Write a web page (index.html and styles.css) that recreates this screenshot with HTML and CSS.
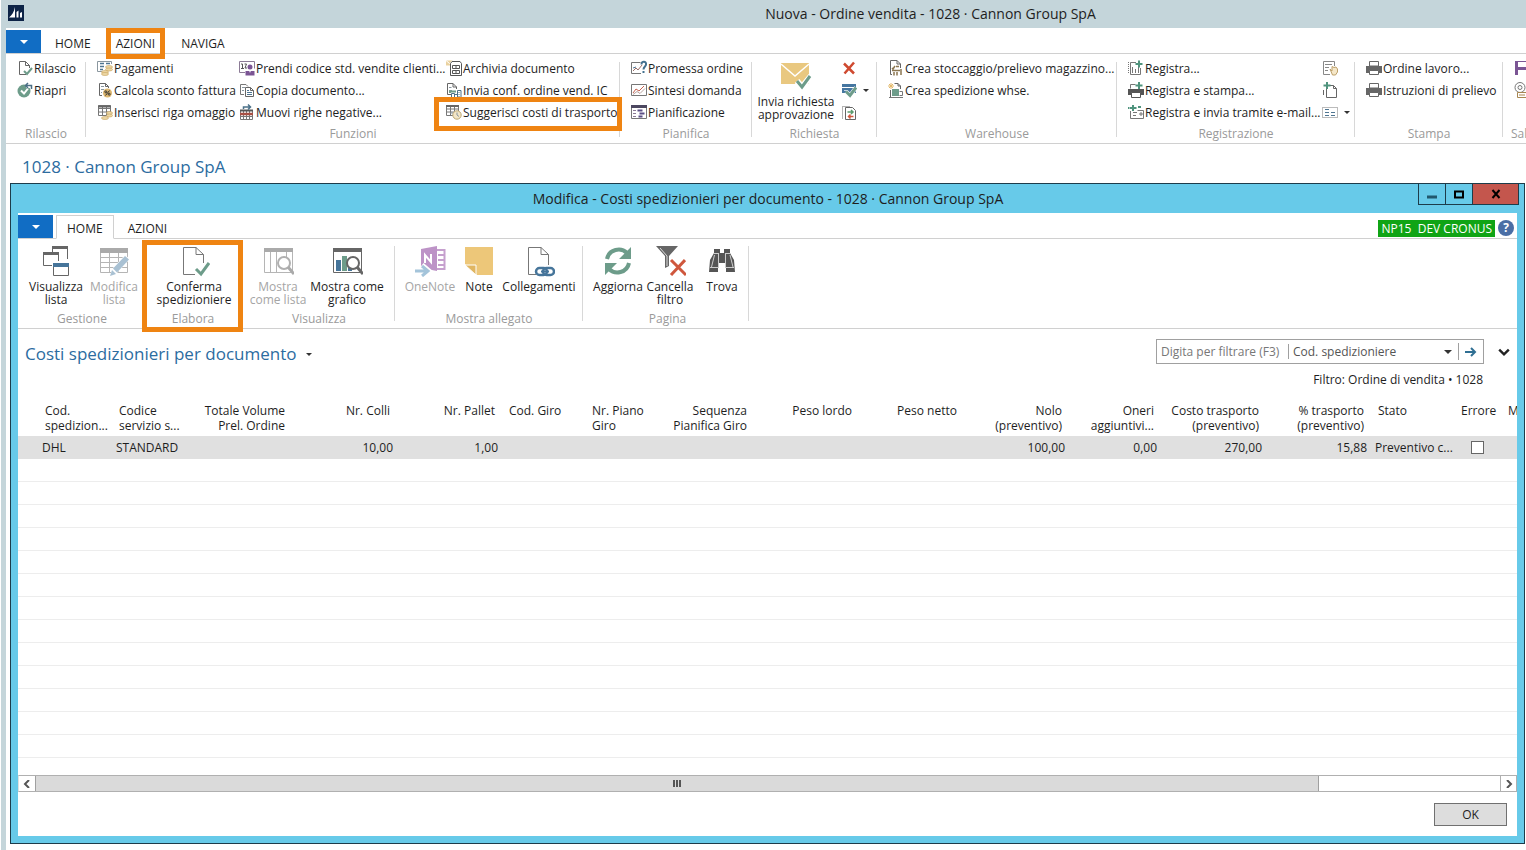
FILE: index.html
```html
<!DOCTYPE html>
<html lang="it">
  <head>
    <meta charset="UTF-8" />
    <meta name="viewport" content="width=device-width, initial-scale=1.0" />
    <title>Nuova - Ordine vendita - 1028 · Cannon Group SpA</title>
    <link rel="stylesheet" href="styles.css">
  </head>
  <body>
    <!-- icon sprite -->
    <svg class="sprite" aria-hidden="true">
      <symbol id="i-page-check" viewBox="0 0 16 16">
        <path d="M9 14.500H2.500V1.500H8.500L12.500 5.500V8M8.500 1.500V5.500H12.500" fill="none" stroke="#666" />
        <path d="M7 11l3 3 5-6" fill="none" stroke="#6d9c8a" stroke-width="2" />
      </symbol>
      <symbol id="i-reopen" viewBox="0 0 16 16">
        <circle cx="7" cy="9" r="6.500" fill="#6d9c8a" />
        <path d="M4 8.500l3 3 4-5" fill="none" stroke="#fff" stroke-width="2" />
        <path d="M15 7V4.500H9" fill="none" stroke="#fff" stroke-width="3" />
        <path d="M14.500 7V3.500H9M11 1L8.500 3.500 11 6" fill="none" stroke="#4b6f86" stroke-width="1.500" />
      </symbol>
      <symbol id="i-payments" viewBox="0 0 16 16">
        <path d="M8 11.500H.5V1.500H14.500V4" fill="none" stroke="#8a979f" />
        <path d="M3 3.500h4M3 6.500h4M3 9.500h3M9 3.500h4" stroke="#4f7591" stroke-width="1.500" />
        <g fill="#ecd7a5" stroke="#c7a35c" stroke-width=".6"><ellipse cx="12" cy="7" rx="3.500" ry="1.500" /><ellipse cx="12" cy="9.500" rx="3.500" ry="1.500" /><ellipse cx="8" cy="12" rx="3.500" ry="1.500" /><ellipse cx="8" cy="14" rx="3.500" ry="1.500" /></g>
      </symbol>
      <symbol id="i-discount" viewBox="0 0 16 16">
        <path d="M5 13.500H2.500V1.500H8.500L11.500 4.500V6M8.500 1.500V4.500H11.500" fill="none" stroke="#666" />
        <path d="M4 4.500h3M4 7.500h3M4 10.500h1" stroke="#8a979f" />
        <circle cx="10.500" cy="11" r="4.500" fill="#dcb66f" />
        <path d="M12.500 8.500l-4 5" stroke="#333" />
        <g fill="none" stroke="#333"><circle cx="8.800" cy="9.800" r="1" /><circle cx="12.200" cy="12.200" r="1" /></g>
      </symbol>
      <symbol id="i-gift-line" viewBox="0 0 16 16">
        <path d="M1.500 1.500h12v10h-12zM1.500 4.500h12M1.500 8h12M5.500 1.500v10M9.500 1.500v10" fill="none" stroke="#777" />
        <path d="M1 2.500h13" stroke="#666" stroke-width="2" />
        <g fill="#ecd7a5" stroke="#c7a35c" stroke-width=".6"><ellipse cx="12.500" cy="9" rx="3" ry="1.500" /><ellipse cx="12.500" cy="11.500" rx="3" ry="1.500" /><ellipse cx="8" cy="14" rx="3.500" ry="1.500" /></g>
      </symbol>
      <symbol id="i-std-code" viewBox="0 0 16 16">
        <path d="M6 12.500H.5v-11h15v7" fill="none" stroke="#8c7b96" />
        <path d="M2 4h1.500v4M2 8.500h3M5.500 4h2L6 8h2" fill="none" stroke="#555" />
        <circle cx="11" cy="7" r="2.500" fill="#7b5594" />
        <path d="M6.500 15.500V11h9v4.500z" fill="#7b5594" /><path d="M10 10.500l1 2.500 1-2.500z" fill="#fff" />
      </symbol>
      <symbol id="i-copy" viewBox="0 0 16 16">
        <path d="M5 12.500H1.500V2.500H7L9 4.500" fill="none" stroke="#777" />
        <path d="M3 5.500h3M3 8.500h2" stroke="#8a979f" />
        <path d="M6.500 5.500h5l3 3v6h-8z" fill="#fff" stroke="#666" /><path d="M11.500 5.500v3h3" fill="none" stroke="#666" />
        <path d="M8 8.500h2M8 10.500h5M8 12.500h5" stroke="#4f7591" />
      </symbol>
      <symbol id="i-move-lines" viewBox="0 0 16 16">
        <path d="M1.500 6.500h12v9h-12zM1.500 12.500h12M4.500 6v9M7.500 6v9M10.500 6v9" fill="none" stroke="#777" />
        <path d="M1 6.500h13" stroke="#555" stroke-width="2" /><path d="M1 10h13" stroke="#a85044" stroke-width="2.500" />
        <path d="M4.500 5V3h7M9 .5L11.500 3 9 5.500" fill="none" stroke="#4b7189" stroke-width="1.500" />
      </symbol>
      <symbol id="i-archive" viewBox="0 0 16 16">
        <path d="M0 .5h7v5H0z" fill="#ead2a0" /><path d="M0 .5l3.500 3 3.500-3" fill="none" stroke="#fff" />
        <path d="M4.500 3.500l1.500-2h8l1.500 2v12h-11z" fill="#fff" stroke="#555" />
        <path d="M6.500 5.500h7v3h-7zM6.500 10.500h7v3h-7zM9 7h2M9 12h2" fill="none" stroke="#555" />
      </symbol>
      <symbol id="i-send-ic" viewBox="0 0 16 16">
        <path d="M5 12.500H1.500V1.500H7L10.500 5V7M7 1.500V5H10.500" fill="none" stroke="#666" />
        <path d="M3 5.500h2.500M3 8.500h3" stroke="#8a979f" />
        <path d="M4 11V9.500h6" fill="none" stroke="#6d9c8a" stroke-width="2" />
        <path d="M5.500 15.500v-4h3v4zM11.500 15.500v-7h3.500v7zM8.500 15.500v-3h3v3" fill="#fff" stroke="#4b7189" />
        <path d="M13 10v5" stroke="#4b7189" stroke-dasharray="1" />
      </symbol>
      <symbol id="i-suggest" viewBox="0 0 16 16">
        <path d="M.5 1.500h12v10H.5zM.5 5h12M.5 8h12M4.500 1.500v10M8.500 1.500v10" fill="none" stroke="#777" />
        <path d="M0 2h13" stroke="#666" stroke-width="2" />
        <circle cx="11" cy="11" r="4.200" fill="#f3e6c6" stroke="#bda873" /><path d="M11 8.500V11l2 1.500M4 9h3" fill="none" stroke="#8a979f" />
      </symbol>
      <symbol id="i-promise" viewBox="0 0 16 16">
        <path d="M10 13.500H.5V2.500h9" fill="none" stroke="#777" />
        <path d="M2 11l3-3 2 2 4-5" fill="none" stroke="#9a6f6a" /><path d="M2 8l3-1" stroke="#4f7591" />
        <path d="M10.500 4.500c0-4 5-3.500 4.500 0 0 2-2.500 2-2.500 5" fill="none" stroke="#42708f" stroke-width="2" /><path d="M11.500 11h2v2h-2z" fill="#42708f" />
      </symbol>
      <symbol id="i-demand" viewBox="0 0 16 16">
        <path d="M.5 2.500h15v11H.5z" fill="none" stroke="#777" />
        <path d="M2 11l3-4 3 2 5-5" fill="none" stroke="#c4604f" /><path d="M2 12.500l4-3 3 2 5-5" fill="none" stroke="#b9a4a0" />
      </symbol>
      <symbol id="i-planning" viewBox="0 0 16 16">
        <path d="M.5 1.500h15v13H.5z" fill="none" stroke="#777" /><path d="M0 2.500h16" stroke="#4c4760" stroke-width="3" />
        <path d="M2 6.500h3M2 9.500h3M2 12.500h3" stroke="#8b7b96" /><path d="M6.500 6.500h5M8.500 9.500h5M7.500 12.500h4" stroke="#5b4f86" stroke-width="2" />
      </symbol>
      <symbol id="i-mail-check" viewBox="0 0 32 32">
        <path d="M1 3h28v21H1z" fill="#e9c880" /><path d="M1 4l14 12L29 4" fill="none" stroke="#fff" stroke-width="1.500" />
        <path d="M17 21l5 6 9-11" fill="none" stroke="#fff" stroke-width="6" /><path d="M17 21l5 6 8-11" fill="none" stroke="#6d9c8a" stroke-width="3" />
      </symbol>
      <symbol id="i-cross" viewBox="0 0 16 16">
        <path d="M3 3.500l10 10M13 2.500L3.500 13.500" stroke="#cf4a30" stroke-width="2.500" />
      </symbol>
      <symbol id="i-approve" viewBox="0 0 16 16">
        <path d="M1 2h14v9H1z" fill="#4576a0" /><path d="M1 5.500h14" stroke="#fff" /><path d="M3 8.500h3" stroke="#c5d6e4" />
        <path d="M5 9.500l4 4 6-8" fill="none" stroke="#fff" stroke-width="4" /><path d="M5 9.500l4 4 6-8" fill="none" stroke="#6d9c8a" stroke-width="3" />
      </symbol>
      <symbol id="i-comments" viewBox="0 0 16 16">
        <path d="M1.500 14.500v-12h7" fill="none" stroke="#666" stroke-dasharray="1" /><path d="M4.500 3.500h7l3 3v9h-10z" fill="#fff" stroke="#666" />
        <path d="M6.500 8h5M10 6l2 2-2 2" fill="none" stroke="#5c9b6e" stroke-width="1.500" /><path d="M12.500 12.500H8M9.500 10.500l-2 2 2 2" fill="none" stroke="#cf5a40" stroke-width="1.500" />
      </symbol>
      <symbol id="i-pick" viewBox="0 0 16 16">
        <path d="M4 14.500H2.500V.5H9L12.500 4V8M9 .5V4H12.500" fill="none" stroke="#666" />
        <path d="M4 8l1 1 2-3M8 6.500h3M4 10.500h8M6 12v3.500M9 12v3.500M13 9v6" fill="none" stroke="#8b7650" stroke-width="1.500" />
      </symbol>
      <symbol id="i-ship" viewBox="0 0 16 16">
        <path d="M3 1v6M0 4h6M1 2l4 4M5 2L1 6" stroke="#e3b96b" /><path d="M2.500 8v7M6.500 1.500H10L12.500 4V7M10 1.500V4h2.500" fill="none" stroke="#666" />
        <path d="M4 7h7v7H4z" fill="#6d9c8a" /><path d="M11.500 9.500h3v4h-3M1 15.500h14" fill="none" stroke="#777" />
      </symbol>
      <symbol id="i-post" viewBox="0 0 16 16">
        <path d="M8 2.500H2.500v12h10V8M4.500 7v6M7.500 9v4M10.500 7v6" fill="none" stroke="#777" /><path d="M.5 2v12" stroke="#777" stroke-dasharray="1" />
        <path d="M11 .5v7M7.500 4h7" stroke="#4f937d" stroke-width="2" />
      </symbol>
      <symbol id="i-post-print" viewBox="0 0 16 16">
        <path d="M0 7h16v6H0z" fill="#555" /><path d="M3.500 10.500h9v5h-9z" fill="#fff" stroke="#555" /><path d="M2.500 6.500v-4h5" fill="none" stroke="#777" />
        <path d="M11 0v7M7.500 3.500h7" stroke="#4f937d" stroke-width="2" />
      </symbol>
      <symbol id="i-post-mail" viewBox="0 0 16 16">
        <path d="M2.500 7v7.500h13v-8h-6M5 8.500h4M5 11.500h3M12 9h2v2h-2z" fill="none" stroke="#777" />
        <path d="M5 1v6M1.500 4h7M0 4h1M10 3h3" stroke="#4f937d" stroke-width="2" />
      </symbol>
      <symbol id="i-hand-page" viewBox="0 0 16 16">
        <path d="M8 14.500H1.500v-13h11V6M3 4.500h7M3 7.500h4M3 10.500h3" fill="none" stroke="#888" />
        <path d="M8 9l2 2V6.500l2 1 2-.5 1.500 2v3l-2 3h-3z" fill="#f5e7c8" stroke="#bda06a" />
      </symbol>
      <symbol id="i-new-page" viewBox="0 0 16 16">
        <path d="M4.500 7v8.500h10v-9L11.500 3.500H8M11.500 3.500v3h3M1.500 8v5" fill="none" stroke="#666" /><path d="M5 0v7M1.500 3.500h7" stroke="#4f937d" stroke-width="2" />
      </symbol>
      <symbol id="i-list-dim" viewBox="0 0 16 16">
        <path d="M.5 3.500h15v10H.5z" fill="none" stroke="#777" stroke-dasharray="1" /><path d="M3 5.500h4M3 8.500h4M3 11.500h4M9 8.500h4M9 11.500h4" stroke="#4f7591" />
      </symbol>
      <symbol id="i-printer" viewBox="0 0 16 16">
        <path d="M0 6h16v7H0z" fill="#666" /><path d="M3.500 1.500h9v5h-9zM3.500 10.500h9v4h-9z" fill="#fff" stroke="#666" /><path d="M3 6.500h10" stroke="#666" stroke-width="2" />
      </symbol>
      <symbol id="i-save" viewBox="0 0 16 16">
        <path d="M1 1h12l2 2v12H1z" fill="#7b5594" /><path d="M4 2h8v5H4zM4 10h8v5H4z" fill="#fff" />
      </symbol>
      <symbol id="i-at" viewBox="0 0 16 16">
        <circle cx="6" cy="5.500" r="5" fill="none" stroke="#777" /><circle cx="6" cy="5.500" r="2" fill="none" stroke="#777" /><path d="M3.500 10.500h11v5h-11zM5 13h6" fill="#fff" stroke="#a88650" />
      </symbol>

      <symbol id="i-view-list" viewBox="0 0 32 32">
        <path d="M12.500 12V2.500h15V14" fill="none" stroke="#666" /><path d="M12 1h16v3H12z" fill="#666" />
        <path d="M3.500 7.500h15v13h-15z" fill="#fff" stroke="#666" /><path d="M3 7h16v3H3z" fill="#666" />
        <path d="M12 16h18v16H12z" fill="#fff" /><path d="M13.500 18.500h15v12h-15z" fill="#fff" stroke="#666" /><path d="M13 18h16v4H13z" fill="#46759a" />
      </symbol>
      <symbol id="i-edit-list" viewBox="0 0 32 32">
        <path d="M2.500 3.500h27v24h-27zM2.500 12.500h27M2.500 17.500h27M2.500 22.500h27M11.500 7v20M20.500 7v20" fill="#fff" stroke="#b5b5b5" /><path d="M2 3h28v5H2z" fill="#aaa" />
        <path d="M12 31l2-7L27 10l5 4-13 14z" fill="#fff" /><path d="M12 31l2-6 4 4zM15 23.500L27 11l4 3.500-12 13z" fill="#a9c1d3" />
      </symbol>
      <symbol id="i-confirm" viewBox="0 0 32 32">
        <path d="M17 29.500H5.500V2.500H18L25.500 9.500V18M18 2.500V9.500H25.500" fill="none" stroke="#777" />
        <path d="M18 24l5 5 8-11" fill="none" stroke="#6d9c8a" stroke-width="3" />
      </symbol>
      <symbol id="i-show-list" viewBox="0 0 32 32">
        <path d="M2.500 3.500h28v24h-28zM8.500 7v20M14.500 7v20M24.500 7v5" fill="#fff" stroke="#b5b5b5" /><path d="M2 3h29v4H2z" fill="#aaa" />
        <circle cx="22" cy="18" r="6" fill="#fff" stroke="#b0b0b0" stroke-width="2" /><path d="M26 22l6 7" stroke="#aaa" stroke-width="3" />
      </symbol>
      <symbol id="i-show-chart" viewBox="0 0 32 32">
        <path d="M2.500 3.500h28v24h-28z" fill="#fff" stroke="#666" /><path d="M2 3h29v4H2z" fill="#666" />
        <path d="M5 15h5v11H5z" fill="#46759a" /><path d="M11 11h5v15h-5z" fill="#6d9c8a" /><path d="M17 17h4v9h-4z" fill="#46759a" />
        <circle cx="22" cy="18" r="6" fill="#fff" stroke="#666" stroke-width="2" /><path d="M26 22l6 7" stroke="#666" stroke-width="3" />
      </symbol>
      <symbol id="i-onenote" viewBox="0 0 32 32">
        <path d="M22 5h8.500v19H22M24 10h6M24 15h6M24 20h6" fill="none" stroke="#c6a0ce" stroke-width="2" />
        <path d="M7 4l16-3v25L7 23z" fill="#bd93c7" /><path d="M11 18V10l6 7V9" fill="none" stroke="#fff" stroke-width="2" />
        <path d="M0 26h12M8 20l7 6-7 6" fill="none" stroke="#fff" stroke-width="5" /><path d="M1 26h12M8 21l6 5-6 5" fill="none" stroke="#a4c4da" stroke-width="3" />
      </symbol>
      <symbol id="i-note" viewBox="0 0 32 32">
        <path d="M2 2h28v28H14L2 19z" fill="#edc779" /><path d="M2 20h11v10z" fill="#e0b662" stroke="#fff" />
      </symbol>
      <symbol id="i-links" viewBox="0 0 32 32">
        <path d="M13 29.500H5.500V2.500H18L25.500 9.500V20M18 2.500V9.500H25.500" fill="none" stroke="#777" />
        <g fill="none" stroke="#46759a" stroke-width="2.500"><rect x="13" y="23" width="11" height="7" rx="3.500" /><rect x="20" y="23" width="11" height="7" rx="3.500" /></g><path d="M18 26.500h8" stroke="#46759a" stroke-width="2" />
      </symbol>
      <symbol id="i-refresh" viewBox="0 0 32 32">
        <path d="M5 14C7 4 19 2 25 8M27 18C25 28 13 30 7 24" fill="none" stroke="#6d9c8a" stroke-width="4" />
        <path d="M29 2v12H17zM3 30V18h12z" fill="#6d9c8a" />
      </symbol>
      <symbol id="i-clear-filter" viewBox="0 0 32 32">
        <path d="M2 1h22L15 11v10l-4 2V11z" fill="#666" /><path d="M6 3l7 8v10" fill="none" stroke="#ddd" />
        <path d="M17 15l15 15M31 15L17 30" stroke="#cf573d" stroke-width="3" />
      </symbol>
      <symbol id="i-find" viewBox="0 0 32 32">
        <path d="M8 4h6v4h4V4h6v4l4 7 1 12h-9V18h-8v9H3l1-12 4-7z" fill="#555" />
        <path d="M8 8.500h5M19 8.500h5M4 22.500h9M19 22.500h9M8.500 10L5.500 22M12.500 9v14M19.500 9v14M24 10l3 12" stroke="#ccc" fill="none" />
      </symbol>
    </svg>

    <div class="app">
      <header class="app-title">
        <svg class="app-logo" viewBox="0 0 16 16">
          <rect width="16" height="16" fill="#0d2346" />
          <path d="M1 12.500C4 10 6 7 7 2v10.500zM8.500 12.500V7l2-1.500v7zM12 12.500V8l2-1v5.500z" fill="#fff" />
        </svg>
        <h1>Nuova - Ordine vendita - 1028 · Cannon Group SpA</h1>
      </header>

      <nav class="tabs">
        <button class="file-btn" aria-label="Menu"><span class="caret white"></span></button>
        <a class="tab" href="#">HOME</a>
        <a class="tab marked" href="#">AZIONI</a>
        <a class="tab" href="#">NAVIGA</a>
      </nav>

      <div class="ribbon">
        <section class="group g-rilascio">
          <div class="items">
            <div class="col">
              <button class="item"><svg><use href="#i-page-check" /></svg>Rilascio</button>
              <button class="item"><svg><use href="#i-reopen" /></svg>Riapri</button>
            </div>
          </div>
          <p class="group-name">Rilascio</p>
        </section>
        <section class="group g-funzioni">
          <div class="items">
            <div class="col">
              <button class="item"><svg><use href="#i-payments" /></svg>Pagamenti</button>
              <button class="item"><svg><use href="#i-discount" /></svg>Calcola sconto fattura</button>
              <button class="item"><svg><use href="#i-gift-line" /></svg>Inserisci riga omaggio</button>
            </div>
            <div class="col">
              <button class="item"><svg><use href="#i-std-code" /></svg>Prendi codice std. vendite clienti...</button>
              <button class="item"><svg><use href="#i-copy" /></svg>Copia documento...</button>
              <button class="item"><svg><use href="#i-move-lines" /></svg>Muovi righe negative...</button>
            </div>
            <div class="col">
              <button class="item"><svg><use href="#i-archive" /></svg>Archivia documento</button>
              <button class="item"><svg><use href="#i-send-ic" /></svg>Invia conf. ordine vend. IC</button>
              <button class="item marked"><svg><use href="#i-suggest" /></svg>Suggerisci costi di trasporto</button>
            </div>
          </div>
          <p class="group-name">Funzioni</p>
        </section>
        <section class="group g-pianifica">
          <div class="items">
            <div class="col">
              <button class="item"><svg><use href="#i-promise" /></svg>Promessa ordine</button>
              <button class="item"><svg><use href="#i-demand" /></svg>Sintesi domanda</button>
              <button class="item"><svg><use href="#i-planning" /></svg>Pianificazione</button>
            </div>
          </div>
          <p class="group-name">Pianifica</p>
        </section>
        <section class="group g-richiesta">
          <div class="items">
            <button class="big"><svg><use href="#i-mail-check" /></svg>Invia richiesta approvazione</button>
            <div class="col">
              <button class="item" aria-label="Annulla"><svg><use href="#i-cross" /></svg></button>
              <button class="item" aria-label="Approvazioni"><svg><use href="#i-approve" /></svg><span class="caret"></span></button>
              <button class="item" aria-label="Commenti"><svg><use href="#i-comments" /></svg></button>
            </div>
          </div>
          <p class="group-name">Richiesta</p>
        </section>
        <section class="group g-warehouse">
          <div class="items">
            <div class="col">
              <button class="item"><svg><use href="#i-pick" /></svg>Crea stoccaggio/prelievo magazzino...</button>
              <button class="item"><svg><use href="#i-ship" /></svg>Crea spedizione whse.</button>
            </div>
          </div>
          <p class="group-name">Warehouse</p>
        </section>
        <section class="group g-registrazione">
          <div class="items">
            <div class="col">
              <button class="item"><svg><use href="#i-post" /></svg>Registra...</button>
              <button class="item"><svg><use href="#i-post-print" /></svg>Registra e stampa...</button>
              <button class="item"><svg><use href="#i-post-mail" /></svg>Registra e invia tramite e-mail...</button>
            </div>
            <div class="col">
              <button class="item" aria-label="Test"><svg><use href="#i-hand-page" /></svg></button>
              <button class="item" aria-label="Nuovo"><svg><use href="#i-new-page" /></svg></button>
              <button class="item" aria-label="Elenco"><svg><use href="#i-list-dim" /></svg><span class="caret"></span></button>
            </div>
          </div>
          <p class="group-name">Registrazione</p>
        </section>
        <section class="group g-stampa">
          <div class="items">
            <div class="col">
              <button class="item"><svg><use href="#i-printer" /></svg>Ordine lavoro...</button>
              <button class="item"><svg><use href="#i-printer" /></svg>Istruzioni di prelievo</button>
            </div>
          </div>
          <p class="group-name">Stampa</p>
        </section>
        <section class="group g-salva">
          <div class="items">
            <div class="col">
              <button class="item" aria-label="Salva"><svg><use href="#i-save" /></svg></button>
              <button class="item" aria-label="E-mail"><svg><use href="#i-at" /></svg></button>
            </div>
          </div>
          <p class="group-name">Salva</p>
        </section>
      </div>

      <h2 class="order-title">1028 · Cannon Group SpA</h2>

      <div class="dialog" role="dialog" aria-labelledby="dialog-title">
        <header class="dialog-title">
          <h2 id="dialog-title">Modifica - Costi spedizionieri per documento - 1028 · Cannon Group SpA</h2>
          <div class="window-btns">
            <button aria-label="Riduci"><svg viewBox="0 0 10 10"><path d="M0 8h10" stroke="#21586d" stroke-width="3" /></svg></button>
            <button aria-label="Ingrandisci"><svg viewBox="0 0 10 10"><path d="M1 2.500h8v6H1z" fill="none" stroke="#000" stroke-width="2" /></svg></button>
            <button class="close" aria-label="Chiudi"><svg viewBox="0 0 10 10"><path d="M1.500 1l7 8M8.500 1l-7 8" stroke="#000" stroke-width="2" /></svg></button>
          </div>
        </header>

        <div class="dialog-body">
          <nav class="tabs">
            <button class="file-btn" aria-label="Menu"><span class="caret white"></span></button>
            <a class="tab active" href="#">HOME</a>
            <a class="tab" href="#">AZIONI</a>
            <span class="server">NP15&nbsp; DEV CRONUS</span>
            <button class="help" aria-label="Guida">?</button>
          </nav>

          <div class="ribbon large">
            <section class="group g-gestione">
              <div class="items">
                <button class="big"><svg><use href="#i-view-list" /></svg>Visualizza lista</button>
                <button class="big" disabled><svg><use href="#i-edit-list" /></svg>Modifica lista</button>
              </div>
              <p class="group-name">Gestione</p>
            </section>
            <section class="group g-elabora marked">
              <div class="items">
                <button class="big"><svg><use href="#i-confirm" /></svg>Conferma spedizioniere</button>
              </div>
              <p class="group-name">Elabora</p>
            </section>
            <section class="group g-visualizza">
              <div class="items">
                <button class="big" disabled><svg><use href="#i-show-list" /></svg>Mostra come lista</button>
                <button class="big wide"><svg><use href="#i-show-chart" /></svg>Mostra come grafico</button>
              </div>
              <p class="group-name">Visualizza</p>
            </section>
            <section class="group g-allegato">
              <div class="items">
                <button class="big" disabled><svg><use href="#i-onenote" /></svg>OneNote</button>
                <button class="big narrow"><svg><use href="#i-note" /></svg>Note</button>
                <button class="big wide"><svg><use href="#i-links" /></svg>Collegamenti</button>
              </div>
              <p class="group-name">Mostra allegato</p>
            </section>
            <section class="group g-pagina">
              <div class="items">
                <button class="big"><svg><use href="#i-refresh" /></svg>Aggiorna</button>
                <button class="big"><svg><use href="#i-clear-filter" /></svg>Cancella filtro</button>
                <button class="big"><svg><use href="#i-find" /></svg>Trova</button>
              </div>
              <p class="group-name">Pagina</p>
            </section>
          </div>

          <div class="list-head">
            <h3>Costi spedizionieri per documento <span class="caret"></span></h3>
            <div class="filter">
              <form class="filter-box">
                <input type="text" placeholder="Digita per filtrare (F3)" aria-label="Filtro">
                <select aria-label="Campo">
                  <option>Cod. spedizioniere</option>
                </select>
                <span class="caret"></span>
                <button type="button" aria-label="Applica filtro"><svg viewBox="0 0 12 12"><path d="M0 6h9M6 2l4 4-4 4" fill="none" stroke="#2f6f93" stroke-width="2" /></svg></button>
              </form>
              <button class="expand" aria-label="Espandi"><svg viewBox="0 0 10 10"><path d="M1 3l4 4 4-4" fill="none" stroke="#222" stroke-width="2" /></svg></button>
            </div>
          </div>
          <p class="filter-text">Filtro: Ordine di vendita • 1028</p>

          <div class="grid">
            <table>
              <colgroup>
                <col class="w94"><col class="w75"><col class="w105"><col class="w105"><col class="w105"><col class="w83"><col class="w64"><col class="w105"><col class="w105"><col class="w105"><col class="w105"><col class="w92"><col class="w105"><col class="w105"><col class="w83"><col class="w47"><col class="w16">
              </colgroup>
              <thead>
                <tr>
                  <th>Cod.<br>spedizion...</th>
                  <th>Codice<br>servizio s...</th>
                  <th class="num">Totale Volume<br>Prel. Ordine</th>
                  <th class="num">Nr. Colli</th>
                  <th class="num">Nr. Pallet</th>
                  <th>Cod. Giro</th>
                  <th>Nr. Piano<br>Giro</th>
                  <th class="num">Sequenza<br>Pianifica Giro</th>
                  <th class="num">Peso lordo</th>
                  <th class="num">Peso netto</th>
                  <th class="num">Nolo<br>(preventivo)</th>
                  <th class="num">Oneri<br>aggiuntivi...</th>
                  <th class="num">Costo trasporto<br>(preventivo)</th>
                  <th class="num">% trasporto<br>(preventivo)</th>
                  <th>Stato</th>
                  <th>Errore</th>
                  <th>M</th>
                </tr>
              </thead>
              <tbody>
                <tr>
                  <td>DHL</td>
                  <td>STANDARD</td>
                  <td></td>
                  <td class="num">10,00</td>
                  <td class="num">1,00</td>
                  <td></td>
                  <td></td>
                  <td></td>
                  <td></td>
                  <td></td>
                  <td class="num">100,00</td>
                  <td class="num">0,00</td>
                  <td class="num">270,00</td>
                  <td class="num">15,88</td>
                  <td>Preventivo c...</td>
                  <td><input type="checkbox" aria-label="Errore"></td>
                  <td></td>
                </tr>
              </tbody>
            </table>
            <div class="empty-rows"></div>
          </div>

          <div class="scrollbar">
            <button aria-label="Scorri a sinistra"><svg viewBox="0 0 8 8"><path d="M6 0L2 4l4 4" fill="none" stroke="#555" stroke-width="2" /></svg></button>
            <div class="track"><div class="thumb"><i></i><i></i><i></i></div></div>
            <button aria-label="Scorri a destra"><svg viewBox="0 0 8 8"><path d="M2 0l4 4-4 4" fill="none" stroke="#555" stroke-width="2" /></svg></button>
          </div>

          <footer>
            <button class="ok">OK</button>
          </footer>
        </div>
      </div>
    </div>
  </body>
</html>
```
FILE: styles.css
```css
* {
  margin: 0;
  padding: 0;
  box-sizing: border-box;
}

body {
  background-color: #fff;
  color: #1e1e1e;
  font-family: "Open Sans", "Noto Sans", sans-serif;
  font-size: 12px;
  line-height: 15px;
  overflow: hidden;
}

button,
input,
select {
  font: inherit;
  color: inherit;
  background: none;
  border: none;
}

h1,
h2,
h3,
th {
  font-weight: normal;
}

a {
  color: inherit;
  text-decoration: none;
}

.sprite {
  display: none;
}

.app {
  height: 100vh;
  display: flex;
  flex-direction: column;
  margin-left: 1px;
  border-left: 5px solid #c4d5da;
  padding-bottom: 6px;
}

.app-title {
  height: 28px;
  display: flex;
  align-items: center;
  margin-left: -5px;
  padding: 0 0 2px 7px;
  background-color: #c4d5da;
}

.app-logo {
  width: 16px;
  height: 16px;
}

.app-title h1 {
  flex: 1;
  padding-left: 311px;
  text-align: center;
  font-size: 14px;
}

.caret {
  display: inline-block;
  border: 3px solid transparent;
  border-top-color: #333;
  border-bottom: none;
}

.caret.white {
  border-width: 4px;
  border-top-color: #fff;
  border-bottom: none;
}

/* tabs */
.tabs {
  height: 26px;
  display: flex;
  align-items: flex-end;
  padding-top: 2px;
  border-bottom: 1px solid #d0d0d0;
}

.file-btn {
  width: 35px;
  height: 23px;
  display: flex;
  justify-content: center;
  align-items: center;
  margin-right: 3px;
  background-color: #116dc4;
}

.tab {
  height: 24px;
  padding: 4px 10px 0;
  margin-bottom: -1px;
  line-height: 18px;
  border: 1px solid transparent;
}

.tab.active {
  background-color: #fff;
  border-color: #d0d0d0;
  border-bottom-color: #fff;
  margin-right: 3px;
}

.marked {
  position: relative;
}

.marked::after {
  content: "";
  position: absolute;
  border: 5px solid #ef8412;
  pointer-events: none;
}

.tab.marked {
  margin: 0 4px -1px 3px;
}

.tab.marked::after {
  inset: -3px 0 -6px;
}

.server {
  margin: 0 3px 1px auto;
  padding: 1px 3px;
  color: #fff;
  background-color: #10a415;
}

.help {
  width: 16px;
  height: 16px;
  margin: 0 3px 2px 0;
  border-radius: 50%;
  background-color: #4a6ea5;
  color: #fff;
  font-weight: bold;
  line-height: 16px;
}

/* ribbon */
.ribbon {
  height: 90px;
  flex-shrink: 0;
  display: flex;
  overflow: hidden;
  border-bottom: 1px solid #d0d0d0;
}

.group {
  flex-shrink: 0;
  display: flex;
  flex-direction: column;
  padding: 3px 0 0 11px;
  background: linear-gradient(#d8d8d8, #d8d8d8) right 8px / 1px 75px no-repeat;
}

.items {
  flex: 1;
  display: flex;
}

.group-name {
  margin-left: -11px;
  line-height: 19px;
  text-align: center;
  color: #9a9a9a;
}

.item {
  height: 22px;
  display: flex;
  align-items: center;
  gap: 1px;
  white-space: nowrap;
}

.item svg {
  flex-shrink: 0;
  width: 16px;
  height: 16px;
}

.item .caret {
  margin-left: 5px;
}

.item.marked::after {
  inset: -4px -5px -8px -12px;
}

.g-rilascio {
  width: 80px;
}

.g-funzioni {
  width: 534px;
}

.g-funzioni .col:nth-child(1) {
  width: 142px;
}

.g-funzioni .col:nth-child(2) {
  width: 207px;
}

.g-pianifica {
  width: 132px;
}

.g-richiesta {
  width: 125px;
}

.g-richiesta .big {
  width: 80px;
  margin: 0 5px 0 -7px;
}

.g-warehouse {
  width: 240px;
}

.g-registrazione {
  width: 238px;
}

.g-registrazione .col:first-child {
  width: 194px;
}

.g-stampa {
  width: 148px;
}

.g-salva {
  width: 60px;
}

.g-salva .group-name {
  padding-left: 8px;
  text-align: left;
}

.big {
  flex-shrink: 0;
  width: 58px;
  display: flex;
  flex-direction: column;
  align-items: center;
  line-height: 13px;
}

.big svg {
  width: 32px;
  height: 32px;
  margin: 3px 0;
}

.big:disabled {
  color: #a5a5a5;
}

.big.wide {
  width: 80px;
}

.big.narrow {
  width: 40px;
}

.order-title {
  padding: 11px 16px 4px;
  font-size: 17px;
  line-height: 24px;
  color: #2c6c9f;
}

/* dialog */
.dialog {
  flex: 1;
  display: flex;
  flex-direction: column;
  margin: 0 1px 0 4px;
  padding: 0 7px 7px;
  background-color: #67cae9;
  border: 1px solid #1d3c4a;
}

.dialog-title {
  height: 29px;
  display: flex;
  align-items: center;
  margin-right: -2px;
}

.dialog-title h2 {
  flex: 1;
  text-align: center;
  margin-right: -100px;
  font-size: 14px;
}

.window-btns {
  display: flex;
  align-self: flex-start;
  border: 1px solid #1d3c4a;
  border-top: none;
}

.window-btns button {
  width: 27px;
  height: 20px;
  display: flex;
  justify-content: center;
  align-items: center;
  border-right: 1px solid #1d3c4a;
}

.window-btns svg {
  width: 10px;
  height: 10px;
}

.window-btns .close {
  width: 45px;
  border-right: none;
  background-color: #c4564d;
}

.dialog-body {
  flex: 1;
  display: flex;
  flex-direction: column;
  background-color: #fff;
}

.large {
  overflow: visible;
}

.large .group {
  padding-left: 6px;
  background-position: right 7px;
}

.large .group-name {
  margin-left: -6px;
}

.large .g-gestione,
.large .g-pagina {
  padding-left: 9px;
}

.g-gestione {
  width: 125px;
}

.g-elabora {
  width: 100px;
}

.g-elabora .big {
  width: 90px;
}

.g-elabora.marked::after {
  inset: 1px 0 -4px -1px;
}

.g-visualizza {
  width: 152px;
}

.g-allegato {
  width: 188px;
}

.g-pagina {
  width: 166px;
}

.g-pagina .big {
  width: 52px;
}

.list-head {
  display: flex;
  justify-content: space-between;
  align-items: flex-start;
  padding: 10px 7px 0;
}

.list-head h3 {
  display: flex;
  align-items: center;
  gap: 10px;
  font-size: 17px;
  line-height: 30px;
  color: #2c6c9f;
}

.filter {
  display: flex;
  align-items: center;
  gap: 14px;
}

.filter-box {
  height: 25px;
  display: flex;
  align-items: center;
  border: 1px solid #a0a0a0;
  color: #555;
}

.filter-box input {
  width: 132px;
  padding-left: 4px;
  border-right: 1px solid #a0a0a0;
}

.filter-box input::placeholder {
  color: #777;
}

.filter-box select {
  width: 155px;
  padding-left: 4px;
  appearance: none;
}

.filter-box .caret {
  border-width: 4px;
  border-bottom: none;
  margin-right: 6px;
}

.filter-box button {
  width: 25px;
  height: 17px;
  display: flex;
  justify-content: center;
  align-items: center;
  border-left: 1px solid #a0a0a0;
}

.filter-box svg {
  width: 12px;
  height: 12px;
}

.expand svg {
  width: 12px;
  height: 12px;
  display: block;
}

.filter-text {
  padding: 3px 34px 0 0;
  line-height: 16px;
  text-align: right;
}

.grid {
  flex: 1;
  display: flex;
  flex-direction: column;
  padding-top: 15px;
  overflow: hidden;
}

table {
  width: 100%;
  table-layout: fixed;
  border-collapse: collapse;
}

.w94 { width: 94px; }
.w75 { width: 75px; }
.w105 { width: 105px; }
.w92 { width: 92px; }
.w83 { width: 83px; }
.w64 { width: 64px; }
.w47 { width: 47px; }
.w16 { width: 16px; }

th,
td {
  padding: 0 4px;
  text-align: left;
  vertical-align: top;
  white-space: nowrap;
}

th {
  height: 33px;
  padding: 0 7px;
}

td {
  height: 23px;
  line-height: 23px;
}

th:first-child {
  padding-left: 27px;
}

td:first-child {
  padding-left: 24px;
}

th.num,
td.num {
  text-align: right;
}

tbody tr {
  background-color: #e0e0e0;
}

td input {
  display: block;
  width: 13px;
  height: 13px;
  margin: 5px auto 0;
  appearance: none;
  background-color: #fff;
  border: 1px solid #666;
}

.empty-rows {
  flex: 1;
  background: repeating-linear-gradient(#fff 0 22px, #ededed 22px 23px);
}

.scrollbar {
  height: 17px;
  display: flex;
  border: 1px solid #b0b0b0;
  border-left-color: #e0e0e0;
}

.scrollbar button {
  width: 16px;
  display: flex;
  justify-content: center;
  align-items: center;
}

.scrollbar button:last-child {
  border-left: 1px solid #b0b0b0;
}

.scrollbar svg {
  width: 8px;
  height: 8px;
}

.track {
  flex: 1;
  display: grid;
  grid-template-columns: 1284fr 181fr;
}

.thumb {
  height: 15px;
  display: flex;
  justify-content: center;
  align-items: center;
  gap: 1px;
  background-color: #dadada;
  border: 1px solid #a0a0a0;
  border-width: 0 1px;
}

.thumb i {
  width: 2px;
  height: 7px;
  background-color: #555;
}

footer {
  display: flex;
  justify-content: flex-end;
  padding: 11px 10px 10px;
}

.ok {
  width: 73px;
  height: 23px;
  background-color: #ddd;
  border: 1px solid #707070;
}
```
